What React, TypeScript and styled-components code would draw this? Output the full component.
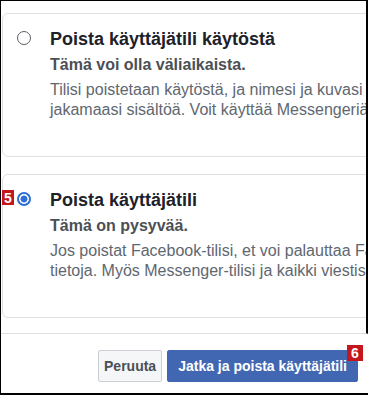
import styled, {createGlobalStyle} from 'styled-components'

const Global = createGlobalStyle`
    html, body {
        margin: 0;
        padding: 0;
        background: #fff;
    }
    body {
        font-family: "Liberation Sans", Arial, sans-serif;
    }
`;

const Frame = styled.div`
    position: relative;
    display: flex;
    flex-direction: column;
    box-sizing: border-box;
    width: 368px;
    height: 395px;
    border-top: 1px solid #000;
    border-left: 1px solid #000;
    border-bottom: 2px solid #000;
    overflow: hidden;
`;

const Body = styled.div`
    display: flex;
    flex-direction: column;
    gap: 17px;
    box-sizing: border-box;
    height: 333px;
    padding: 12px 0 0 1px;
    border-right: 2px solid #000;
    border-bottom: 1px solid #dddfe2;
    overflow: hidden;
`;

/* wider than the panel: the right part is cut off as in the dialog */
const Card = styled.div`
    position: relative;
    flex-shrink: 0;
    display: flex;
    align-items: flex-start;
    gap: 19px;
    box-sizing: border-box;
    width: 460px;
    height: 144px;
    padding: 14px 0 0 14px;
    border: 1px solid #dddfe2;
    border-radius: 6px;
`;

const Radio = styled.span<{$checked?: boolean}>`
    flex-shrink: 0;
    box-sizing: border-box;
    width: 14px;
    height: 14px;
    margin-top: 3px;
    border-radius: 50%;
    border: ${p => p.$checked ? '2px solid #2f6fd6' : '1.5px solid #5c5f66'};
    background: ${p => p.$checked ? 'radial-gradient(circle, #2f6fd6 0 3.2px, #fff 3.8px)' : '#fff'};
`;

const Texts = styled.div`
    display: flex;
    flex-direction: column;
    white-space: nowrap;
`;

const Title = styled.div`
    font-size: 18px;
    line-height: 22px;
    font-weight: bold;
    color: #1d2129;
`;

const Sub = styled.div`
    margin-top: 5px;
    font-size: 16px;
    line-height: 20px;
    font-weight: bold;
    color: #4b4f56;
`;

const Desc = styled.div`
    margin-top: 5px;
    font-size: 16px;
    line-height: 20px;
    color: #606770;
`;

const Footer = styled.div`
    position: relative;
    flex: 1;
    display: flex;
    justify-content: flex-end;
    align-items: flex-start;
    gap: 5px;
    padding: 16px 10px 0 0;
`;

const Button = styled.button<{$primary?: boolean}>`
    box-sizing: border-box;
    height: 32px;
    padding: 0 ${p => p.$primary ? 10 : 5}px;
    border-radius: 2px;
    border: 1px solid ${p => p.$primary ? '#4267b2' : '#ccd0d5'};
    background: ${p => p.$primary ? '#4267b2' : '#f5f6f7'};
    color: ${p => p.$primary ? '#fff' : '#4b4f56'};
    font-family: "Liberation Sans", Arial, sans-serif;
    font-size: 14px;
    font-weight: bold;
`;

const Badge = styled.span`
    position: absolute;
    display: flex;
    align-items: center;
    justify-content: center;
    background: #c4161c;
    color: #fff;
    font-family: "Liberation Sans", Arial, sans-serif;
    font-weight: bold;
    font-size: 14px;
`;

const CardBadge = styled(Badge)`
    left: -1px;
    top: 15px;
    width: 12px;
    height: 15px;
`;

const ButtonBadge = styled(Badge)`
    right: 5px;
    top: 11px;
    width: 16px;
    height: 16px;
`;

export default function App() {
    return (
        <>
            <Global/>
            <Frame>
                <Body>
                    <Card>
                        <Radio/>
                        <Texts>
                            <Title>Poista käyttäjätili käytöstä</Title>
                            <Sub>Tämä voi olla väliaikaista.</Sub>
                            <Desc>
                                Tilisi poistetaan käytöstä, ja nimesi ja kuvasi poistetaan useimmista<br/>
                                jakamaasi sisältöä. Voit käyttää Messengeriä edelleen.
                            </Desc>
                        </Texts>
                    </Card>
                    <Card>
                        <CardBadge>5</CardBadge>
                        <Radio $checked/>
                        <Texts>
                            <Title>Poista käyttäjätili</Title>
                            <Sub>Tämä on pysyvää.</Sub>
                            <Desc>
                                Jos poistat Facebook-tilisi, et voi palauttaa Facebookiin lisäämiäsi<br/>
                                tietoja. Myös Messenger-tilisi ja kaikki viestisi poistetaan.
                            </Desc>
                        </Texts>
                    </Card>
                </Body>
                <Footer>
                    <Button>Peruuta</Button>
                    <Button $primary>Jatka ja poista käyttäjätili</Button>
                    <ButtonBadge>6</ButtonBadge>
                </Footer>
            </Frame>
        </>
    )
}
